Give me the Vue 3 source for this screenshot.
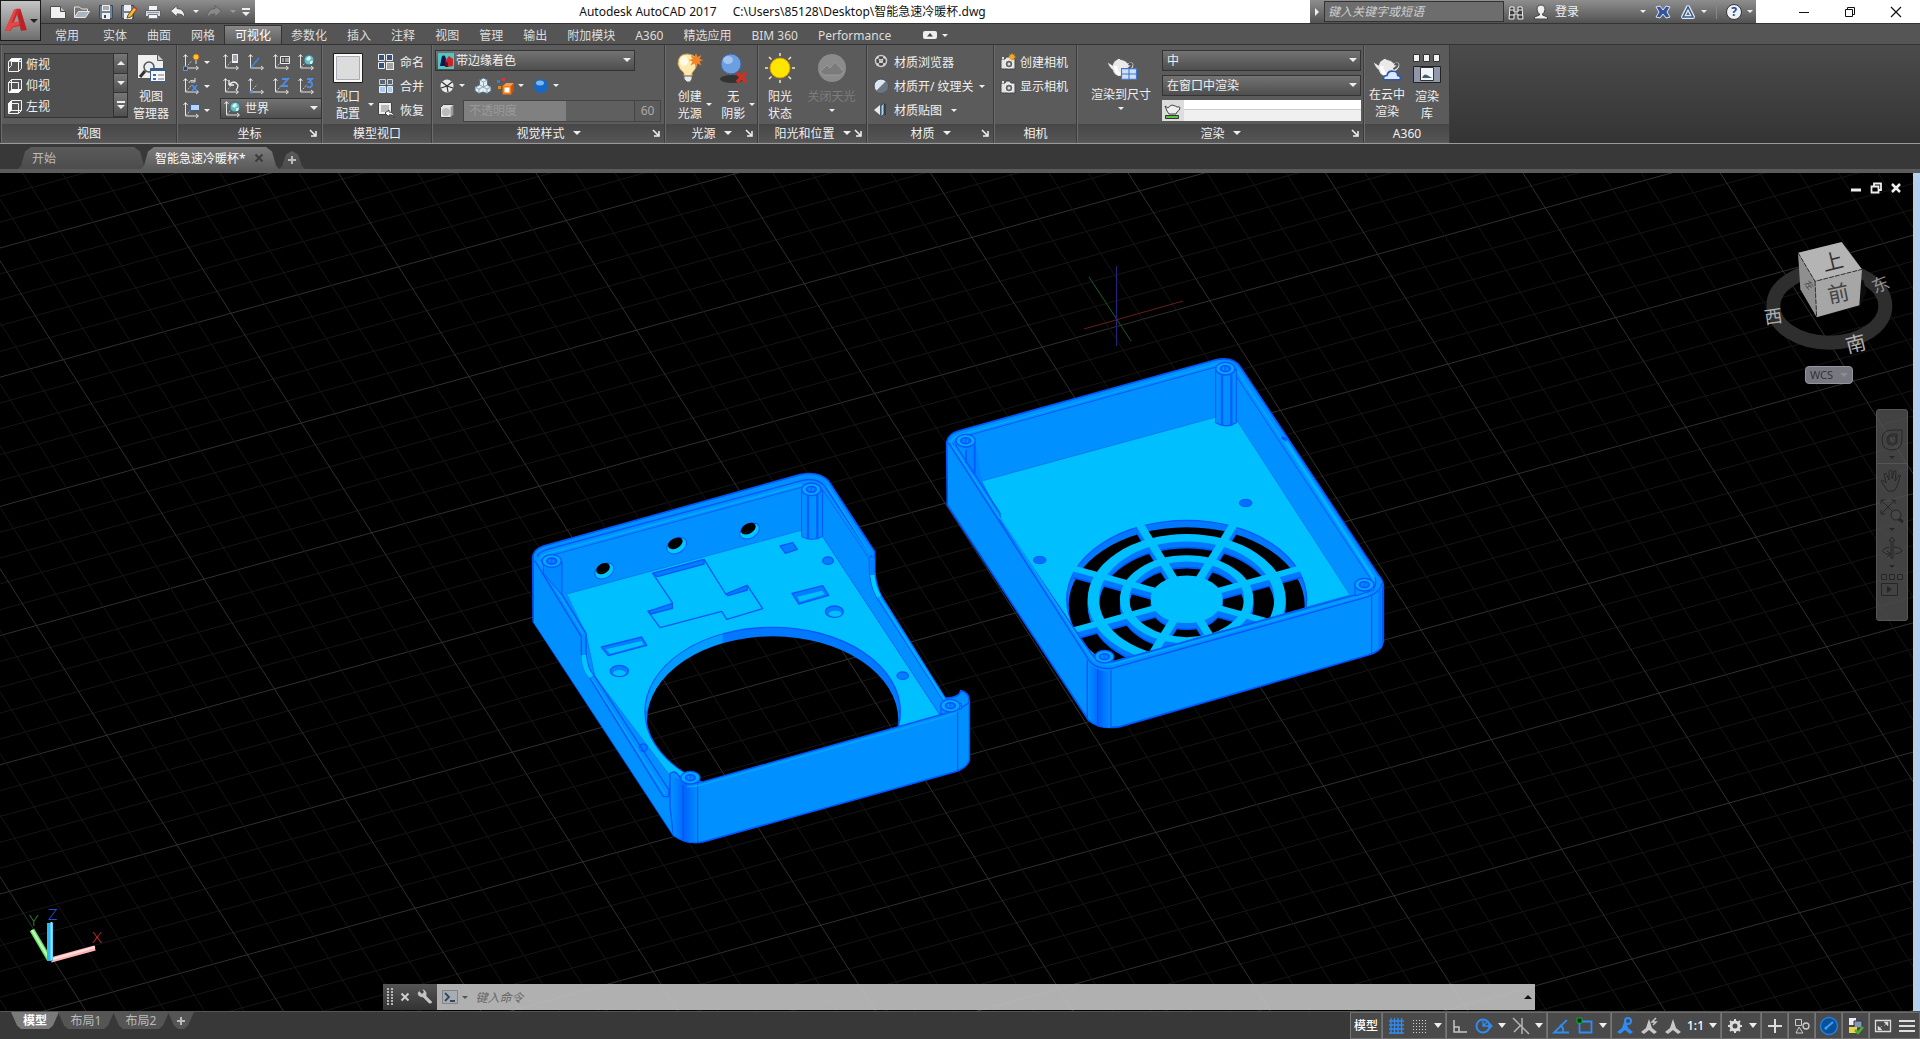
<script setup>
import { h } from 'vue'

const axes = '<path d="M3.500 2v13H16M1.500 4l2-2.500 2 2.500M14 13l2.500 2-2.500 2" fill="none" stroke="#e4e4e4"/><path d="M4 14.500l6-7" stroke="#bdbdbd" stroke-dasharray="2 1"/>'
const globe = (x, y, r) => `<circle cx="${x}" cy="${y}" r="${r}" fill="#6fb9c4" stroke="#2d6f86"/><path d="M${x - r + 2} ${y - 1}q2-${r - 2} ${r - 1}-${r - 2}l1 3-3 2zM${x + 1} ${y + 1}l3 0-1 3-2 0z" fill="#d6f5e6"/>`
const pot = '<path d="M2 9l5 3q1-4 4-5l2-2 2 2q5 1 6 3 5-2 6 1 1 4-5 8-3 4-9 4-5-1-6-6-4-3-5-8z" fill="#e9e9e9" stroke="#5d5d5d"/><path d="M22 12q3-2 3 0t-4 4" fill="none" stroke="#555" stroke-width="2"/><path d="M10 13q0 6 4 8" stroke="#fff" stroke-width="3" fill="none"/>'
const cube = '<path d="M2.500 5.500l3-3h10v10l-3 3h-10z" fill="#555" stroke="#f2f2f2"/>'
const cam = '<path d="M2 6h4l1-2h4l1 2h4v10H2z" fill="#e3e3e3" stroke="#444"/><circle cx="10" cy="11" r="4" fill="#666" stroke="#fff"/><circle cx="10" cy="11" r="1.500" fill="#ddd"/><path d="M3 4h2v2H3z" fill="#ddd"/>'
const person = '<path d="M9 2l3 9 5 4-3 2-5-4-5 4-3-2 5-4z" fill="currentColor"/>'

const icons = {
  logo: [32, 32, '<path d="M1 28L12 3q1-2 4-2h4l8 26-7 1-1.500-6-9 2L8 28z" fill="#d12a2e"/><path d="M12 18l4-10 3 9z" fill="#979797"/><path d="M12 3q1-2 4-2L9 18l11-2 1 4-11 3-3 5H1z" fill="#e2474a"/><path d="M20 1l8 26-7 1-4-17z" fill="#a91d22" opacity=".6"/>'],
  newf: [18, 16, '<path d="M1.500 2.500h10l5 5v7h-15z" fill="#f1f1f1" stroke="#4c4c4c"/><path d="M11.500 2.500v5h5" fill="#bcbcbc" stroke="#4c4c4c"/>'],
  open: [18, 16, '<path d="M1.500 13V3h5l2 2h6v3" fill="#777" stroke="#e4e4e4"/><path d="M1.500 13.500l4-6h11l-4 6z" fill="#a8b4c0" stroke="#e8e8e8"/>'],
  save: [16, 16, '<path d="M1.500 1.500h13v13h-13z" fill="#6f8296" stroke="#384858"/><path d="M4 1h8v6H4zM4 9h8v6H4z" fill="#eee"/><path d="M5 3h6M5 5h6" stroke="#666"/><path d="M6 11h2v3H6z" fill="#445"/>'],
  saveas: [18, 16, '<path d="M1.500 1.500h12v13h-12z" fill="#6f8296" stroke="#384858"/><path d="M4 1h7v6H4zM4 9h8v6H4z" fill="#eee"/><path d="M8 11l6-8 3 2-6 8-4 1z" fill="#f1b63f" stroke="#754a10"/><path d="M14 3l3 2" stroke="#c34" stroke-width="2"/>'],
  print: [18, 16, '<path d="M4.500 1.500h9v5h-9z" fill="#f4f4f4" stroke="#777"/><path d="M1.500 6.500h15v6h-15z" fill="#d9dde2" stroke="#59616a"/><path d="M4.500 10.500h9v4h-9z" fill="#eef6fc" stroke="#777"/><path d="M3 8.500h12" stroke="#89a"/>'],
  undo: [18, 16, '<path d="M1.500 7L8 1.500v3q8 0 8 10-2-5-8-4.500v3z" fill="#eee" stroke="#555"/>'],
  redo: [18, 16, '<path d="M16.500 7L10 1.500v3q-8 0-8 10 2-5 8-4.500v3z" fill="#898989" stroke="#626262"/>'],
  bino: [16, 16, '<path d="M2 3h4v5h4V3h4l1 12H10v-5H6v5H1z" fill="#3b3b3b" stroke="#f0f0f0"/><path d="M1 11h5M10 11h5M2 6h4M10 6h4" stroke="#f0f0f0"/>'],
  user: [16, 16, '<path d="M8 1q4 0 4 4.500Q11.500 9 9.500 10v1l5 2v2h-13v-2l5-2v-1Q4.500 9 4 5.500 4 1 8 1z" fill="#eee" stroke="#444"/>'],
  xch: [16, 16, '<path d="M1 3l4-1 3 4 3-4 4 1-3 5 3 5-4 1-3-4-3 4-4-1 3-5z" fill="#35549a" stroke="#dfe8f4"/>'],
  tri: [16, 16, '<path d="M8 3L3 13h10z" fill="none" stroke="#e1e8f1" stroke-width="4" stroke-linejoin="round"/><path d="M8 3L3 13h10z" fill="none" stroke="#36588f" stroke-width="1.500"/>'],
  min: [14, 14, '<path d="M2 7.500h10" stroke="#111"/>'],
  max: [14, 14, '<path d="M2.500 4.500h7v7h-7zM4.500 4.500v-2h7v7h-2" fill="none" stroke="#111"/>'],
  close: [14, 14, '<path d="M2 2l10 10M12 2L2 12" stroke="#111" stroke-width="1.200"/>'],
  vtop: [18, 18, cube + '<path d="M5.500 5.500h10M12.500 5.500v10M2.500 12.500l3-3v-4" stroke="#f2f2f2" fill="none"/><path d="M2.500 5.500l3-3h10l-3 3z" fill="#fff"/>'],
  vbot: [18, 18, cube + '<path d="M5.500 2.500v10h10M2.500 5.500h10v10" stroke="#f2f2f2" fill="none"/><path d="M2.500 15.500l3-3h10l-3 3z" fill="#fff"/>'],
  vleft: [18, 18, cube + '<path d="M5.500 2.500v10h10M12.500 15.500v-10h-10" stroke="#f2f2f2" fill="none"/><path d="M2.500 5.500l3-3v10l-3 3z" fill="#fff"/>'],
  vman: [32, 32, '<path d="M2.500 2.500h20l6 6v18h-26z" fill="#efefef" stroke="#555"/><path d="M22.500 2.500v6h6" fill="#ccc" stroke="#555"/><circle cx="14" cy="15" r="5" fill="#e8eef4" stroke="#555" stroke-width="1.500"/><path d="M10 19l-5 6" stroke="#333" stroke-width="3"/><path d="M15.500 16.500h15v13h-15z" fill="#f6f6f6" stroke="#3d5c86"/><path d="M16 18h14" stroke="#3d5c86" stroke-width="2"/><path d="M18 22h3v2h-3zM18 26h3v2h-3z" fill="#356bb8"/><path d="M23 23h6M23 27h6" stroke="#777"/>'],
  ax1: [20, 18, axes + '<circle cx="14" cy="4" r="3" fill="#f7c53a" stroke="#c66a12"/><path d="M14 7v4" stroke="#ddd"/><path d="M1.500 13.500h4v4h-4z" fill="#444" stroke="#5d96e8"/>'],
  ax2: [20, 18, axes + '<path d="M10 1h6v9h-6z" fill="#f0f0f0"/><path d="M11 3h4M11 5h4M11 7h4" stroke="#456"/>'],
  ax3: [20, 18, axes + '<path d="M4 14.500L12 5" stroke="#3a86ea" stroke-width="1.500"/>'],
  ax4: [20, 18, axes + '<path d="M8.500 3.500h9v7h-9z" fill="#444" stroke="#eee"/><path d="M10 6h2M13 6h4M10 8h2M13 8h4" stroke="#eee"/>'],
  ax5: [20, 18, axes + globe(12, 7, 5)],
  ax6: [20, 18, axes + '<path d="M7 6q1-4 6-2M13 1v4H9" stroke="#ddd" fill="none"/><path d="M10 8l5 6M15 8l-5 6" stroke="#4f8ee8" stroke-width="1.500"/>'],
  ax7: [20, 18, axes + '<path d="M7 8h5M7 8V3M7 8q5-6 9 0 0 3-2 5" stroke="#eee" fill="none" stroke-width="1.300"/>'],
  ax8: [20, 18, axes + '<circle cx="4" cy="15" r="1.500" fill="#4f8ee8"/>'],
  ax9: [20, 18, axes + '<path d="M10 2h6l-6 7h6" stroke="#4f8ee8" fill="none" stroke-width="1.800"/>'],
  ax10: [20, 18, axes + '<path d="M10 2h5l-3 3q4 0 3 3.500-2 3-5 1" stroke="#4f8ee8" fill="none" stroke-width="1.800"/>'],
  ax11: [20, 18, axes + '<path d="M8.500 3.500h9v6h-9z" fill="#b9d3f2" stroke="#345f9d"/>'],
  vport: [32, 32, '<path d="M1.500 1.500h29v29h-29z" fill="#fafafa" stroke="#1c1c1c"/><path d="M4.500 4.500h23v23h-23z" fill="#dcdcdc" stroke="#a9adb8"/>'],
  vnam: [18, 18, '<path d="M1.500 1.500h6v6h-6zM9.500 1.500h6v6h-6zM1.500 9.500h6v6h-6z" fill="#35527c" stroke="#eee"/><path d="M9 9h8v8H9z" fill="#eee"/><path d="M10 11h6M10 13h6M10 15h6" stroke="#555"/>'],
  vjoin: [18, 18, '<path d="M2.500 2.500h6v5h-6zM10.500 2.500h5v5h-5z" fill="#5b6672" stroke="#c9d4e2"/><path d="M2.500 9.500h6v6h-6zM10.500 9.500h5v6h-5z" fill="#a8ccf4" stroke="#e6f0fb"/>'],
  vres: [18, 18, '<path d="M1.500 1.500h13v12h-13z" fill="#eee" stroke="#444"/><path d="M4 4h8v7H4z" fill="#b9b9b9"/><path d="M8 12l4-3v2q5 0 5 6-1-4-5-3v2z" fill="#fff" stroke="#444"/>'],
  vs: [16, 16, '<path d="M0 0h16v16H0z" fill="#51c5c0"/><path d="M4 3q4-2 4 5v5H2z" fill="#15124f"/><path d="M7 8l4-5 4 3v7l-5 1z" fill="#c5252b"/><path d="M7 8l3 2v4H7z" fill="#6d0d16"/>'],
  wheel: [16, 16, '<circle cx="8" cy="8" r="6.500" fill="#e9e9e9"/><path d="M3 4l5 4-6 2M8 8l5-4M8 8l1 6M8 8l6 2" stroke="#333" fill="none" stroke-width="1.200"/>'],
  cubes: [18, 18, '<path d="M5.500 3l4-2 4 2v5l3.500 2v4l-4 2.500-4-1.500-4 1.500-4-2.500v-4l4.500-2z" fill="#e2ecf1" stroke="#4d7386"/><path d="M5.500 3l4 2 4-2M9.500 5v5l-4-2M9.500 10l4-2M1 10l4 2 4-2 4 2 4-2M5 12v4M13 12v4" stroke="#8caab8" fill="none"/>'],
  grp: [18, 18, '<path d="M1 3h3v3H1z" fill="#3b7ade"/><path d="M6 1h3v3H6z" fill="#d33"/><path d="M2 9h3v3H2z" fill="#e80"/><path d="M7.500 9.500h7v7h-7z" fill="#fff" stroke="#f57c13" stroke-width="2"/><path d="M7 9l3-3h8l-3 3z" fill="#f79a4a"/><path d="M15.500 9L18 6v8l-2.500 3z" fill="#c85200"/>'],
  ball: [16, 16, '<circle cx="8" cy="8" r="7" fill="#1668c4"/><ellipse cx="7" cy="5" rx="4" ry="2.500" fill="#78b7f2"/>'],
  xray: [16, 16, '<path d="M1.500 4.500l3-3h10v10l-3 3h-10z" fill="#e4e4e4" stroke="#444"/><path d="M11.500 4.500l3-3v10l-3 3z" fill="#999"/><circle cx="7" cy="9" r="4" fill="#bbb"/>'],
  bulb: [32, 32, '<path d="M13 2q10 0 10 10-1 5-5 9v3h-8v-3Q5 17 4 12 4 2 13 2z" fill="#ffe9ae" stroke="#d2a24a"/><ellipse cx="10" cy="9" rx="4" ry="5" fill="#fffbe8"/><path d="M10 24h8v3l-2 3h-3l-3-3z" fill="#e8e8e8" stroke="#666"/><path d="M22 1l1.500 4 4-2-2 4 4 1-4 1.500 2 4-4-2-1.500 4-1.500-4-4 2 2-4-4-1.500 4-1-2-4 4 2z" fill="#f0862a"/>'],
  noshadow: [32, 32, '<ellipse cx="15" cy="27" rx="12" ry="4" fill="#333"/><circle cx="14" cy="12" r="10" fill="#6d9ee0" stroke="#3d6bab"/><ellipse cx="11" cy="8" rx="5" ry="4" fill="#a3c4f0"/><path d="M20 21l9 9M29 21l-9 9" stroke="#cf3024" stroke-width="3.500"/>'],
  sun: [32, 32, '<path d="M16 1v30M1 16h30M5 5l22 22M27 5L5 27" stroke="#f4e7b8" stroke-width="1.500"/><circle cx="16" cy="16" r="12" fill="#5b5b5b"/><circle cx="16" cy="16" r="10" fill="#ffe500" stroke="#d99a00"/>'],
  sky: [32, 32, '<circle cx="16" cy="16" r="14" fill="#8b8b8b"/><path d="M4 20l7-7 3 3 5-6 9 10-4 3H8z" fill="#7b7b7b" stroke="#999"/>'],
  matb: [16, 16, '<circle cx="8" cy="7" r="5.500" fill="#444" stroke="#ccc" stroke-width="1.500"/><path d="M4 3l8 8M12 3l-8 8" stroke="#ddd" stroke-width="2" stroke-dasharray="2 1"/>'],
  mato: [16, 16, '<circle cx="8" cy="8" r="7" fill="#dce6ee" stroke="#445"/><path d="M3 13A7 7 0 0013 3z" fill="#6a7682"/>'],
  matm: [16, 16, '<path d="M1 8l6-5v10z" fill="#e8e8e8"/><path d="M8 4l3-3v11l-3 3z" fill="#a3cdf5" stroke="#356"/><path d="M12 2v11" stroke="#222"/>'],
  camn: [18, 18, cam + '<path d="M13 0l1 2 2-1-1 2 2 1-2 1 1 2-2-1-1 2-1-2-2 1 1-2-2-1 2-1-1-2 2 1z" fill="#f5a623"/>'],
  cams: [18, 18, cam],
  rsize: [30, 28, pot + '<path d="M15.500 15.500h14v10h-14z" fill="#cfe0f5" stroke="#4076c8"/><path d="M22.500 15.500v10M15.500 20.500h14" stroke="#4076c8"/>'],
  rcloud: [30, 28, pot + '<path d="M12 26q-1-4 3-4 1-5 6-4 4 0 4 4 4 1 2 4z" fill="#dbe9fa" stroke="#2f5aa8" stroke-width="1.500"/>'],
  rlib: [28, 32, '<path d="M.5 2.500h6v7h-6zM10.500 2.500h6v7h-6zM20.500 2.500h6v7h-6z" fill="#f1f1f1" stroke="#333"/><path d="M.5 14.500h27v16H.5z" fill="#8e98aa" stroke="#222"/><path d="M7.500 15.500h13v13h-13z" fill="#eef4f9" stroke="#333"/><path d="M9 26q2-5 5-3l5 3z" fill="#445c66"/>'],
  rprog: [20, 16, '<path d="M3 3l3 2q1-2 4-3 4 1 5 2 3-1 3 1t-3 4l-1 2H7Q5 9 3 3z" fill="#eee" stroke="#444"/><path d="M3.500 12.500h13v3h-13z" fill="#5cc43c" stroke="#333"/>'],
  launch: [8, 8, '<path d="M1 1l5 5M7 2v5H2" stroke="#f2f2f2" stroke-width="1.500" fill="none"/>'],
  pill: [14, 10, '<rect x="0" y="1" width="14" height="8" rx="2" fill="#eee"/><path d="M4 6.500L7 3l3 3.500z" fill="#444"/>'],
  x: [10, 10, '<path d="M1.500 1.500l7 7M8.500 1.500l-7 7" stroke="currentColor" stroke-width="2"/>'],
  plus: [10, 10, '<path d="M5 1v8M1 5h8" stroke="currentColor" stroke-width="2"/>'],
  wrench: [16, 16, '<path d="M2 3l3 3 2-1V1q-4-1-6 3 0 4 5 4l6 6q2 1 3-1L9 7q1-4-2-6" fill="#c4c4c4" stroke="#c4c4c4" stroke-width=".5"/><path d="M2 2l3 3 2-2-2-3z" fill="#444"/>'],
  grip: [6, 18, '<path d="M1 0v18M5 0v18" stroke="#b5b5b5" stroke-width="2" stroke-dasharray="2 1"/>'],
  prompt: [16, 16, '<path d="M.5 1.500h15v13H.5z" fill="#a7adb5" stroke="#7f858c"/><path d="M3 4l4 4-4 4M8 12h5" fill="none" stroke="#3a4654" stroke-width="1.800"/>'],
  wmin: [12, 10, '<path d="M1 7h10" stroke="#eee" stroke-width="3"/>'],
  wmax: [12, 12, '<path d="M1.500 4.500h7v6h-7zM4 4V1.500h7V8H9" fill="none" stroke="#eee" stroke-width="1.800"/>'],
  wx: [12, 12, '<path d="M2 2l8 8M10 2l-8 8" stroke="#eee" stroke-width="2.500"/>'],
  nwheel: [24, 24, '<path d="M22 2v9q0 11-10 11T2 12 12 2zM17 6v6q0 5-5 5t-5-5 5-6z" fill="none" stroke="#262626"/><rect x="9" y="8" width="7" height="7" fill="none" stroke="#262626"/>'],
  nhand: [24, 26, '<path d="M8 23Q3 17 1 13q1-2 5 2L4 6q2-2 3 1l2 5V3q2-2 3 0v8l2-8q2-1 2 1l-1 9 4-6q2 0 1 2l-3 9q-1 3-3 5z" fill="none" stroke="#262626"/>'],
  nzoom: [26, 26, '<path d="M2 2l14 14M16 2L2 16M2 6V2h4M12 2h4v4M2 12v4h4" fill="none" stroke="#262626"/><circle cx="17" cy="17" r="5" fill="#454545" stroke="#262626"/><path d="M20 21l4 3" stroke="#262626" stroke-width="3"/>'],
  norbit: [24, 26, '<path d="M11 23V6H9l3-4 3 4h-2v17zM9 12Q1 14 3 17q3 3 7 2M14 12q8 1 8 4-1 2-7 3M7 16l4 3-4 3" fill="none" stroke="#262626"/>'],
  nshow: [24, 26, '<path d="M1.500 2.500h5v5h-5zM9.500 2.500h5v5h-5zM17.500 2.500h5v5h-5zM1.500 11.500h16v12h-16z" fill="none" stroke="#262626"/><path d="M7 14l5 3-5 4z" fill="#262626"/>'],
  sgrid: [16, 18, '<path d="M3 1v16M6.500 1v16M10 1v16M13.500 1v16M1 4h15M1 8h15M1 12h15M1 16h15" stroke="#2f8cf5" stroke-width="1.300"/>'],
  sdots: [16, 16, '<path d="M1 2.500h15M1 5.500h15M1 8.500h15M1 11.500h15M1 14.500h15" stroke="#d5d5d5" stroke-dasharray="1 2"/>'],
  sortho: [16, 16, '<path d="M2 2v12h13M2 9h5v5" stroke="#c5c5c5" stroke-width="1.500" fill="none"/>'],
  spolar: [18, 18, '<circle cx="8" cy="9" r="6.500" stroke="#2f8cf5" stroke-width="2" fill="none"/><path d="M8 4v5h9M8 9l5-5M14 6l3 3-3 3" stroke="#2f8cf5" stroke-width="1.300" fill="none"/>'],
  siso: [18, 18, '<path d="M1 1l16 16M10 1v16M8 9l-6 6" stroke="#b5b5b5" stroke-width="1.500"/>'],
  sangle: [18, 18, '<path d="M15 3L2 15.500h15M8 8l3 3v5" stroke="#2f8cf5" stroke-width="1.800" fill="none"/>'],
  sosnap: [18, 18, '<path d="M3.500 4.500h12v11h-12z" stroke="#2f8cf5" stroke-width="1.800" fill="none"/><path d="M1 1h5v5H1z" fill="#06320c" stroke="#00b32a"/>'],
  sa1: [18, 18, person + '<circle cx="12" cy="4" r="3" fill="#4a4a4a" stroke="currentColor" stroke-width="2"/>'],
  sa2: [18, 18, person + '<path d="M16 1l-4 4h4l-3 3" fill="none" stroke="currentColor" stroke-width="1.500"/>'],
  sa3: [18, 18, person],
  gear: [16, 16, '<circle cx="8" cy="8" r="4" fill="none" stroke="#ddd" stroke-width="3"/><path d="M8 1v3M8 12v3M1 8h3M12 8h3M3 3l2 2M11 11l2 2M13 3l-2 2M5 11l-2 2" stroke="#ddd" stroke-width="2"/>'],
  splus: [16, 16, '<path d="M8 1v14M1 8h14" stroke="#ddd" stroke-width="2"/>'],
  shapes: [16, 16, '<path d="M1.500 1.500h6v6h-6zM5 9l4 6H2z" fill="none" stroke="#ccc"/><circle cx="12" cy="8" r="3" fill="none" stroke="#ccc" stroke-width="1.300"/>'],
  perf: [20, 20, '<circle cx="10" cy="10" r="8.500" fill="#0d4f94" stroke="#1e7fe0" stroke-width="1.500"/><path d="M6 13l8-7" stroke="#35a0ff" stroke-width="2"/><circle cx="7" cy="12" r="1.500" fill="#35a0ff"/>'],
  iso: [18, 18, '<path d="M2 1h7v7H2z" fill="#eee"/><path d="M7 4h8v7H7z" fill="#7d98b8" stroke="#334"/><path d="M2 10h8v6H2z" fill="#e6d44c"/><path d="M8 13l3 3 5-6" stroke="#4fae2c" stroke-width="2.500" fill="none"/>'],
  full: [18, 16, '<path d="M1.500 2.500h15v11h-15z" fill="none" stroke="#ddd" stroke-width="1.300"/><path d="M5 11l3-3M10 8l3-3M4 8v4h4zM14 8V4h-4z" fill="#ddd" stroke="#ddd" stroke-width=".5"/>'],
  burger: [16, 16, '<path d="M0 3h16M0 8h16M0 13h16" stroke="#ddd" stroke-width="2"/>'],
}

const Icon = (p) => {
  const [w, ht, body] = icons[p.n]
  return h('svg', { class: 'ico', width: p.w || w, height: p.w ? Math.round((p.w * ht) / w) : ht, viewBox: `0 0 ${w} ${ht}`, 'aria-hidden': 'true', innerHTML: body })
}
Icon.props = ['n', 'w']

const tabs = ['常用', '实体', '曲面', '网格', '可视化', '参数化', '插入', '注释', '视图', '管理', '输出', '附加模块', 'A360', '精选应用', 'BIM 360', 'Performance']

// Grid lines of the drawing plane: every fifth line is a major one
const shallow = []
for (let k = -5; k < 60; k++) shallow.push({ c: 75 + (k * 129.2) / 5, major: k % 5 === 0 })
const steep = []
for (let k = -30; k < 60; k++) steep.push({ c: 338.5 + (k * 197.4) / 5, major: k % 5 === 0 })

const spokes = [22.5, 67.5, 112.5, 157.5, 202.5, 247.5, 292.5, 337.5].map((a) => ({
  x: Math.round(366 * Math.cos((a * Math.PI) / 180)),
  y: Math.round(366 * Math.sin((a * Math.PI) / 180)),
}))

const status = [
  ['sgrid', 'sdots', 'v'],
  ['sortho', 'spolar', 'v', 'siso', 'v'],
  ['sangle', 'sosnap', 'v'],
  ['sa1', 'sa2', 'sa3', '1:1', 'v'],
  ['gear', 'v'],
  ['splus'], ['shapes'], ['perf'], ['iso'],
  ['full', 'burger'],
]
</script>

<template>
  <div class="app">
    <header class="head">
      <button class="appbtn" aria-label="应用程序菜单"><Icon n="logo" w="26" /><i class="car dark"></i></button>
      <div class="titlebar">
        <div class="qat">
          <button v-for="n in ['newf', 'open', 'save', 'saveas', 'print', 'undo']" :key="n" class="q" :aria-label="n"><Icon :n="n" /></button>
          <i class="car"></i>
          <button class="q" aria-label="redo"><Icon n="redo" /></button>
          <i class="car dim"></i>
          <span class="more"><i class="car lg"></i></span>
        </div>
        <div class="title"><span>Autodesk AutoCAD 2017</span><span>C:\Users\85128\Desktop\智能急速冷暖杯.dwg</span></div>
        <div class="info">
          <i class="right"></i>
          <input class="search" type="text" placeholder="键入关键字或短语" aria-label="搜索" />
          <Icon n="bino" /><Icon n="user" />
          <a href="#" class="login">登录</a><i class="car"></i>
          <Icon n="xch" /><Icon n="tri" /><i class="car near"></i><i class="sep"></i>
          <button class="help">?</button><i class="car near"></i>
        </div>
        <div class="win">
          <button aria-label="最小化"><Icon n="min" /></button>
          <button aria-label="还原"><Icon n="max" /></button>
          <button aria-label="关闭"><Icon n="close" /></button>
        </div>
      </div>
      <nav class="tabs">
        <button v-for="t in tabs" :key="t" :class="{ on: t === '可视化' }">{{ t }}</button>
        <span class="pill"><Icon n="pill" /><i class="car"></i></span>
      </nav>
    </header>

    <section class="ribbon">
      <div class="panel p-view">
        <div class="body">
          <div class="list">
            <ul>
              <li><Icon n="vtop" />俯视</li>
              <li><Icon n="vbot" />仰视</li>
              <li><Icon n="vleft" />左视</li>
            </ul>
            <div class="scroll">
              <button aria-label="上"><i class="car up"></i></button>
              <button aria-label="下"><i class="car lg"></i></button>
              <button aria-label="更多"><span class="more"><i class="car lg"></i></span></button>
            </div>
          </div>
          <button class="big"><Icon n="vman" /><span>视图<br />管理器</span></button>
        </div>
        <footer>视图</footer>
      </div>

      <div class="panel p-coord">
        <div class="body coord">
          <div class="cc">
            <span><Icon n="ax1" /><i class="car"></i></span>
            <span><Icon n="ax6" /><i class="car"></i></span>
            <span><Icon n="ax11" /><i class="car"></i></span>
          </div>
          <div class="cr">
            <div class="cg">
              <Icon v-for="n in ['ax2', 'ax3', 'ax4', 'ax5', 'ax7', 'ax8', 'ax9', 'ax10']" :key="n" :n="n" />
            </div>
            <label class="sel"><Icon n="ax5" /><select aria-label="坐标系"><option>世界</option></select></label>
          </div>
        </div>
        <footer>坐标<Icon n="launch" class="la" /></footer>
      </div>

      <div class="panel p-vport">
        <div class="body">
          <button class="big"><Icon n="vport" /><span>视口<br />配置</span><i class="car side"></i></button>
          <div class="rows">
            <button><Icon n="vnam" />命名</button>
            <button><Icon n="vjoin" />合并</button>
            <button><Icon n="vres" />恢复</button>
          </div>
        </div>
        <footer>模型视口</footer>
      </div>

      <div class="panel p-style">
        <div class="body col">
          <label class="sel wide"><Icon n="vs" /><select aria-label="视觉样式"><option>带边缘着色</option></select></label>
          <div class="line">
            <Icon n="wheel" /><i class="car"></i><Icon n="cubes" /><Icon n="grp" /><i class="car"></i><Icon n="ball" /><i class="car"></i>
          </div>
          <div class="line">
            <Icon n="xray" />
            <div class="slider"><label for="opacity">不透明度</label><input id="opacity" type="range" value="60" disabled /><output for="opacity">60</output></div>
          </div>
        </div>
        <footer>视觉样式<i class="car lg"></i><Icon n="launch" class="la" /></footer>
      </div>

      <div class="panel p-light">
        <div class="body">
          <button class="big"><Icon n="bulb" /><span>创建<br />光源</span><i class="car side"></i></button>
          <button class="big"><Icon n="noshadow" /><span>无<br />阴影</span><i class="car side"></i></button>
        </div>
        <footer>光源<i class="car lg"></i><Icon n="launch" class="la" /></footer>
      </div>

      <div class="panel p-sun">
        <div class="body">
          <button class="big"><Icon n="sun" /><span>阳光<br />状态</span></button>
          <button class="big off" disabled><Icon n="sky" /><span>关闭天光</span><i class="car"></i></button>
        </div>
        <footer>阳光和位置<i class="car lg"></i><Icon n="launch" class="la" /></footer>
      </div>

      <div class="panel p-mat">
        <div class="body">
          <div class="rows">
            <button><Icon n="matb" />材质浏览器</button>
            <button><Icon n="mato" />材质开/ 纹理关<i class="car"></i></button>
            <button><Icon n="matm" />材质贴图<i class="car gap"></i></button>
          </div>
        </div>
        <footer>材质<i class="car lg"></i><Icon n="launch" class="la" /></footer>
      </div>

      <div class="panel p-cam">
        <div class="body">
          <div class="rows">
            <button><Icon n="camn" />创建相机</button>
            <button><Icon n="cams" />显示相机</button>
          </div>
        </div>
        <footer>相机</footer>
      </div>

      <div class="panel p-render">
        <div class="body">
          <button class="big"><Icon n="rsize" w="32" /><span>渲染到尺寸</span><i class="car"></i></button>
          <div class="rsel">
            <label class="sel"><select aria-label="渲染预设"><option>中</option></select></label>
            <label class="sel"><select aria-label="渲染目标"><option>在窗口中渲染</option></select></label>
            <div class="prog"><Icon n="rprog" /></div>
          </div>
        </div>
        <footer>渲染<i class="car lg"></i><Icon n="launch" class="la" /></footer>
      </div>

      <div class="panel p-a360">
        <div class="body">
          <button class="big"><Icon n="rcloud" w="32" /><span>在云中<br />渲染</span></button>
          <button class="big"><Icon n="rlib" /><span>渲染<br />库</span></button>
        </div>
        <footer>A360</footer>
      </div>
    </section>

    <nav class="files">
      <button class="ft">开始</button>
      <button class="ft on">智能急速冷暖杯*<Icon n="x" /></button>
      <button class="ft add" aria-label="新建"><Icon n="plus" /></button>
    </nav>

    <main class="canvas">
      <svg class="scene" width="100%" height="100%">
        <defs>
          <clipPath id="holeClip"><ellipse cx="818" cy="815" rx="381" ry="252" /></clipPath>
          <mask id="holeMask" maskUnits="userSpaceOnUse" x="0" y="0" width="1500" height="1300">
            <rect width="1500" height="1300" fill="#fff" />
            <g fill="#000">
              <ellipse cx="818" cy="841" rx="377" ry="252" clip-path="url(#holeClip)" />
              <ellipse cx="309" cy="386" rx="22" ry="15" transform="rotate(-30 309 386)" />
              <ellipse cx="526" cy="310" rx="24" ry="15" transform="rotate(-30 526 310)" />
              <ellipse cx="745" cy="266" rx="24" ry="15" transform="rotate(-30 745 266)" />
            </g>
          </mask>
          <linearGradient id="edge"><stop offset="0" stop-color="#0090ff" /><stop offset=".5" stop-color="#0064ff" /><stop offset="1" stop-color="#0090ff" /></linearGradient>
          <clipPath id="floorClip"><path d="M185 423L885 232L950 240L1290 765L580 962L510 940L245 540z" /></clipPath>
          <g id="post">
            <path d="M-31 0V142Q0 158 31 142V0z" fill="#0090ff" stroke="#0055ff" stroke-width="3" />
            <path d="M-12 14V150M16 14V150" stroke="#0060ff" stroke-width="7" />
          </g>
          <g id="cap">
            <ellipse rx="29" ry="19" fill="#00a8ff" stroke="#0055ff" stroke-width="4" />
            <ellipse rx="15" ry="9" fill="#0070ff" stroke="#0050ff" stroke-width="4" />
            <path d="M-6 4V-5M5 5V-3" stroke="#00a0ff" stroke-width="3" />
          </g>
          <g id="grille" fill="none">
            <circle r="280" stroke-width="34" /><circle r="186" stroke-width="28" />
            <path v-for="s in spokes" :key="s.x + ',' + s.y" :d="`M0 0L${s.x} ${s.y}`" stroke-width="26" />
            <circle r="54" stroke-width="108" />
          </g>
        </defs>

        <g stroke="#151515">
          <line v-for="(l, i) in shallow" :key="i" x1="0" :y1="l.c" x2="3000" :y2="l.c - 830.4" :class="{ major: l.major }" />
          <line v-for="(l, i) in steep" :key="'s' + i" :x1="l.c" y1="0" :x2="l.c + 1282" y2="2000" :class="{ major: l.major }" />
        </g>

        <path d="M1084 156L1183 128" stroke="#64201c" /><path d="M1089 104L1131 168" stroke="#1c5c24" /><path d="M1116.500 93V173" stroke="#24247c" />

        <g transform="translate(500 267) scale(.33333)" stroke-linejoin="round">
          <g mask="url(#holeMask)">
            <path d="M98 355Q98 328 130 318L900 104Q955 92 985 122L1124 335V395Q1128 440 1145 470L1335 775Q1380 772 1382 752Q1408 758 1408 785V960Q1400 985 1365 995L610 1205Q560 1215 520 1185L100 545z" fill="#0090ff" stroke="#0055ff" stroke-width="5" />
            <path d="M190 465L900 272L970 290L1320 825L1300 850L1210 900L620 1060L520 1020L285 710L258 580z" fill="#00bfff" stroke="#0070e8" stroke-width="2" />
            <path d="M112 350Q115 335 150 326L905 122Q950 110 975 140L1115 350" fill="none" stroke="#0055ff" stroke-width="4" />
            <path d="M122 360Q122 344 150 338L905 134" fill="none" stroke="#00a8ff" stroke-width="5" />
            <path d="M140 350L905 142" fill="none" stroke="#0060ff" stroke-width="3" />
            <path d="M968 150L1105 352H1124V395Q1128 440 1145 470L1340 780L1320 825L968 290z" fill="#0090ff" stroke="#0068ff" stroke-width="3" />
            <path d="M980 135L1112 345" fill="none" stroke="#00a8ff" stroke-width="4" />
            <path d="M1108 352V400Q1112 440 1128 470L1330 782" fill="none" stroke="#0058ff" stroke-width="3" />
            <path d="M1117 360V398Q1120 440 1137 468" fill="none" stroke="#0080ff" stroke-width="12" />
            <path d="M1117 405Q1121 444 1137 470" fill="none" stroke="#00d0ff" stroke-width="12" />
            <path d="M1137 470L1332 778" fill="none" stroke="#00b0ff" stroke-width="6" />
            <g fill="#0080ff" stroke="#0058ff" stroke-width="4">
              <path d="M458 400L612 358L677 462L742 436L788 506L680 538L665 514L480 563L444 514L517 498V488z" fill="#00bfff" />
              <path d="M458 400L612 358V372L472 410zM677 462L742 436V450L684 467zM444 514L517 490V505L452 522z" />
              <path d="M304 621L425 591L440 616L325 647zM876 460L968 437L986 466L896 492z" />
              <path d="M318 628L425 603L430 614L330 641zM892 470L966 452L974 463L900 485z" fill="#00bfff" stroke="none" />
              <path d="M840 318L878 308L892 328L856 340z" />
              <ellipse cx="984" cy="362" rx="16" ry="11" /><ellipse cx="1208" cy="707" rx="17" ry="11" /><ellipse cx="430" cy="923" rx="12" ry="11" />
              <ellipse cx="1003" cy="515" rx="27" ry="17" /><ellipse cx="358" cy="693" rx="27" ry="17" />
            </g>
            <ellipse cx="1005" cy="521" rx="19" ry="9" fill="#00bfff" /><ellipse cx="358" cy="699" rx="19" ry="9" fill="#00bfff" />
            <g fill="#00c8ff" stroke="#0058ff" stroke-width="3">
              <ellipse cx="313" cy="393" rx="31" ry="21" transform="rotate(-30 313 393)" />
              <ellipse cx="530" cy="317" rx="32" ry="22" transform="rotate(-30 530 317)" />
              <ellipse cx="749" cy="273" rx="32" ry="21" transform="rotate(-30 749 273)" />
            </g>
            <ellipse cx="818" cy="815" rx="383" ry="253" fill="#0078ff" stroke="#0058ff" stroke-width="4" />
            <path d="M437 815A381 252 0 01668 583V608A381 252 0 00450 790z" fill="#009cff" />
          </g>
          <path d="M100 350L155 362L258 580V640Q262 690 285 710L510 1075L520 1185L100 545z" fill="#0090ff" />
          <path d="M125 372L186 465V380z" fill="#0080ff" />
          <g fill="none" stroke="#0055ff" stroke-width="4">
            <path d="M100 345V545M104 362L244 590V640Q250 690 270 715L490 1070H505L515 1000M122 360L258 580V640Q262 690 285 710L510 1055" />
            <path d="M116 362L250 582M275 716L495 1062" stroke="#00a8ff" />
          </g>
          <path d="M251 645Q254 690 274 710" stroke="#00c8ff" stroke-width="14" fill="none" />
          <path d="M510 1000Q530 985 545 1025Q575 1035 610 1025L1330 822Q1400 800 1408 785V960Q1400 985 1365 995L610 1205Q560 1215 520 1185L510 1100z" fill="#0090ff" stroke="#0055ff" stroke-width="4" />
          <path d="M515 1010L593 1032V1206Q555 1210 520 1185z" fill="url(#edge)" />
          <path d="M549 1035V1200M593 1030V1206M1373 808V992" stroke="#0050e8" stroke-width="3" />
          <path d="M560 1040Q590 1040 620 1030L1330 832Q1385 816 1390 785" fill="none" stroke="#00a8ff" stroke-width="4" />
          <use href="#post" transform="translate(936 148)" /><use href="#cap" transform="translate(934 148)" />
          <path d="M130 365V400L186 465V365z" fill="#0088ff" stroke="#0058ff" stroke-width="3" /><use href="#cap" transform="translate(155 363)" />
          <path d="M1323 795V823L1385 806V790z" fill="#0090ff" stroke="#0055ff" stroke-width="3" /><use href="#cap" transform="translate(1351 797)" />
          <use href="#cap" transform="translate(571 1013)" />
        </g>

        <g transform="translate(920 167) scale(.33333)" stroke-linejoin="round">
          <path d="M80 310Q82 280 125 270L885 60Q940 48 962 82L1375 705Q1392 722 1390 745V905Q1385 935 1345 945L600 1160Q540 1170 505 1140L82 495z" fill="#0090ff" stroke="#0055ff" stroke-width="5" />
          <path d="M92 310Q95 290 140 279L885 73Q930 60 948 88L1365 722" fill="none" stroke="#00a8ff" stroke-width="4" />
          <path d="M98 318Q100 298 145 286L885 82Q925 72 942 98L1095 330L1355 722" fill="none" stroke="#0058ff" stroke-width="3" />
          <path d="M185 423L885 232L950 240L1290 765L580 962L510 940L245 540z" fill="#00bfff" stroke="#0070e8" stroke-width="2" />
          <path d="M1098 305L1365 720" stroke="#00b4ff" stroke-width="7" />
          <path d="M1085 292L1100 300" stroke="#0055ff" stroke-width="8" />
          <g clip-path="url(#floorClip)">
            <ellipse cx="800" cy="778" rx="360" ry="237" fill="#0078ff" stroke="#0058ff" stroke-width="4" />
            <ellipse cx="800" cy="796" rx="354" ry="234" fill="#000" />
            <g stroke="#0058ff"><use href="#grille" transform="translate(800 799) scale(1 .66)" /></g>
            <g stroke="#0078ff"><use v-for="d in [16, 11, 6]" :key="d" href="#grille" :transform="`translate(800 ${778 + d}) scale(1 .66)`" /></g>
            <g stroke="#00bfff"><use href="#grille" transform="translate(800 778) scale(1 .66)" /></g>
          </g>
          <g fill="#0070ff" stroke="#0055ff" stroke-width="3"><ellipse cx="977" cy="489" rx="19" ry="11" /><ellipse cx="359" cy="660" rx="19" ry="11" /></g>
          <path d="M136 305V385L185 423L165 300z" fill="#0084ff" />
          <path d="M164 310V400M138 330V370" stroke="#0058ff" stroke-width="5" />
          <g fill="none" stroke="#0055ff" stroke-width="4">
            <path d="M85 308L500 950Q520 990 575 985L1345 770Q1385 755 1385 730" />
            <path d="M105 312L240 520V540L510 935Q530 970 580 965L1340 755Q1375 745 1365 712" />
            <path d="M97 315L505 940Q525 975 578 972L1342 763" stroke="#00a8ff" />
            <path d="M502 960V1135M1388 740V905" />
          </g>
          <path d="M504 965Q530 997 573 992V1164Q530 1162 504 1136z" fill="url(#edge)" />
          <path d="M533 985V1160M573 990V1164M1355 768V940" stroke="#0050e8" stroke-width="3" />
          <path d="M1380 750V925" stroke="#0078ff" stroke-width="10" />
          <use href="#post" transform="translate(918 88) scale(1 1.130)" /><use href="#cap" transform="translate(916 86)" />
          <path d="M1305 735V768L1362 750V735z" fill="#0090ff" stroke="#0055ff" stroke-width="3" />
          <use href="#cap" transform="translate(137 302)" /><use href="#cap" transform="translate(1333 734)" /><use href="#cap" transform="translate(553 950)" />
        </g>
      </svg>

      <div class="wctl"><Icon n="wmin" /><Icon n="wmax" /><Icon n="wx" /></div>

      <svg class="vcube" width="182" height="140" viewBox="0 0 546 420">
        <ellipse cx="298" cy="258" rx="168" ry="110" fill="none" stroke="#2e2e2e" stroke-width="42" />
        <path d="M215 215L260 292L390 260L410 215L400 180z" fill="#0c0c0c" />
        <path d="M204 98L335 66L396 148L255 184z" fill="#b4b4b4" /><path d="M204 98L255 184L260 292L211 208z" fill="#8f8f8f" /><path d="M255 184L396 148L388 256L260 292z" fill="#a6a6a6" />
        <path d="M204 98L255 184L396 148M255 184L260 292" fill="none" stroke="#333" stroke-width="3" stroke-dasharray="14 4" />
        <g class="ct" text-anchor="middle">
          <text x="308" y="147" font-size="62" fill="#333" transform="rotate(-14 308 125)">上</text>
          <text x="325" y="244" font-size="64" fill="#444" transform="rotate(-12 325 220)">前</text>
          <text x="232" y="202" font-size="26" fill="#444" transform="rotate(50 232 200)">左</text>
          <text x="130" y="309" font-size="54" fill="#b0b0b0" transform="rotate(-8 130 290)">西</text>
          <text x="452" y="212" font-size="52" fill="#909090" transform="rotate(-22 452 194)">东</text>
          <text x="377" y="393" font-size="60" fill="#b0b0b0" transform="rotate(-14 377 372)">南</text>
        </g>
      </svg>
      <button class="wcs">WCS<i></i></button>
      <div class="nav">
        <Icon n="nwheel" /><i class="car"></i><hr /><Icon n="nhand" /><Icon n="nzoom" /><i class="car"></i><Icon n="norbit" /><i class="car"></i><Icon n="nshow" />
      </div>

      <svg class="ucs" width="120" height="131" viewBox="0 0 120 131">
        <path d="M51 80L95 68" stroke="#ffb3b3" stroke-width="5" /><path d="M53 79L95 67" stroke="#ffe0e0" stroke-width="2" />
        <path d="M49 79L32 50" stroke="#6be86b" stroke-width="5" /><path d="M48 77L32 50" stroke="#c5ffc0" stroke-width="2" />
        <path d="M50 81V43" stroke="#2cb8f5" stroke-width="6" /><path d="M51.500 80V42" stroke="#8ce8ff" stroke-width="2" />
        <g class="ax"><text x="29" y="46" fill="#2f9a2f">Y</text><text x="48" y="40" fill="#2a60f0">Z</text><text x="92" y="63" fill="#d83a3a">X</text></g>
      </svg>

      <div class="cmd">
        <div class="cmdl"><Icon n="grip" /><Icon n="x" /><Icon n="wrench" /></div>
        <div class="cmdr"><Icon n="prompt" /><i class="car"></i><input type="text" placeholder="键入命令" aria-label="命令" /><i class="car up"></i></div>
      </div>
    </main>

    <footer class="bottom">
      <div class="lay">
        <button class="on">模型</button><button>布局1</button><button>布局2</button><button class="add" aria-label="新建布局"><Icon n="plus" /></button>
      </div>
      <div class="stat">
        <div class="sg"><button class="model">模型</button></div>
        <div v-for="(g, i) in status" :key="i" class="sg">
          <template v-for="(s, j) in g" :key="j">
            <i v-if="s === 'v'" class="car lg"></i>
            <button v-else-if="s === '1:1'" class="scale">1:1</button>
            <button v-else :class="['si', s]" :aria-label="s"><Icon :n="s" /></button>
          </template>
        </div>
      </div>
    </footer>
  </div>
</template>

<style>
body { margin: 0; background: #000; }
.ico { display: block; flex: none; }
</style>

<style scoped>
* { box-sizing: border-box; }
.app { min-height: 100vh; display: flex; flex-direction: column; font: 12px/17px "Noto Sans", "Noto Sans CJK SC", sans-serif; color: #f0f0f0; background: #383838; }
button, input, select { font: inherit; color: inherit; background: none; border: 0; padding: 0; margin: 0; }
button { white-space: nowrap; }
a { color: inherit; text-decoration: none; }
.car { flex: none; display: block; width: 0; height: 0; border: 3px solid transparent; border-top-color: #eee; border-bottom: 0; }
.car.lg { border-width: 4px 4px 0; }
.car.up { border-top: 0; border-bottom: 4px solid #eee; border-left-width: 4px; border-right-width: 4px; }
.car.dark { border-top-color: #222; border-width: 4px 4px 0; }
.car.dim { border-top-color: #999; }

.head { display: grid; grid-template: 24px 20px / 41px 1fr; background: #555; }
.appbtn { grid-row: 1 / 3; height: 41px; display: flex; align-items: center; justify-content: center; background: linear-gradient(#c4c4c4, #6e6e6e); border: 1px solid #1b1b1b; }
.titlebar { display: flex; background: #fff; border-bottom: 1px solid #333; }
.qat { width: 214px; padding: 0 5px 0 8px; display: flex; align-items: center; justify-content: space-between; background: linear-gradient(#8e8e8e, #525252); }
.more { border-top: 2px solid #eee; padding-top: 2px; }
.title { flex: 1; display: flex; justify-content: center; align-items: center; gap: 16px; color: #111; }
.info { width: 446px; display: flex; align-items: center; gap: 9px; padding: 0 3px 0 5px; background: linear-gradient(#8e8e8e, #525252); }
.right { border: 4px solid transparent; border-left: 4px solid #eee; border-right: 0; }
.info .right { margin-right: -4px; }
.search { flex: none; width: 180px; height: 21px; padding: 0 3px; background: #6d6d6d; border: 1px solid #333; font-style: italic; margin-right: -5px; }
.search::placeholder { color: #d0d0d0; opacity: 1; }
.login { flex: 1; margin-left: -3px; }
.near { margin-left: -4px; }
.sep { width: 1px; height: 14px; background: #888; }
.help { width: 16px; height: 16px; line-height: 14px; border-radius: 8px; background: #eef2f8; color: #23488f; border: 1px solid #333; font-weight: 700; }
.win { width: 164px; padding-left: 25px; display: flex; }
.win button { width: 46px; display: grid; place-items: center; }
.tabs { display: flex; align-items: flex-end; padding-left: 4px; background: #555; color: #ddd; }
.tabs button { height: 18px; padding: 0 10px; line-height: 17px; }
.tabs button:first-child { padding-right: 14px; }
.tabs button.on { color: #fff; background: linear-gradient(#888, #5f5f5f); outline: 1px solid #333; }
.pill { display: flex; align-items: center; gap: 5px; height: 18px; margin-left: 22px; }

.ribbon { display: flex; height: 100px; padding-left: 1px; background: linear-gradient(#4b4b4b, #343434); border-top: 1px solid #333; border-bottom: 1px solid #999; }
.panel { display: flex; flex-direction: column; border-right: 1px solid #3c3c3c; border-left: 1px solid #6c6c6c; background: #5b5b5b; }
.panel footer { height: 18px; margin-bottom: 1px; line-height: 17px; display: flex; align-items: center; justify-content: center; gap: 8px; position: relative; background: linear-gradient(#474747, #555); }
.la { position: absolute; right: 4px; top: 5px; }
.body { flex: 1; display: flex; padding: 5px 2px 0; }
.big { display: flex; flex-direction: column; align-items: center; position: relative; padding-top: 2px; }
.big span { margin-top: 4px; text-align: center; }
.big > .car { margin-top: 4px; }
.big > .side { position: absolute; right: 0; top: 49px; }
.off { color: #7d7d7d; }
.rows { display: flex; flex-direction: column; }
.rows button { display: flex; align-items: center; gap: 5px; height: 24px; }
.p-view { width: 176px; }
.p-coord { width: 145px; }
.p-vport { width: 110px; }
.p-style { width: 233px; }
.p-light { width: 93px; }
.p-sun { width: 109px; }
.p-mat { width: 127px; }
.p-cam { width: 83px; }
.p-render { width: 287px; }
.p-a360 { width: 86px; }
.list { display: flex; width: 124px; height: 65px; margin-top: 3px; border: 1px solid #333; }
.list ul { flex: 1; list-style: none; margin: 0; padding: 0; background: #4f4f4f; }
.list li { display: flex; align-items: center; gap: 2px; height: 21px; padding-left: 1px; }
.scroll { width: 14px; display: grid; border-left: 1px solid #333; }
.scroll button { display: grid; place-items: center; background: linear-gradient(#777, #505050); border-bottom: 1px solid #333; }
.p-view .big { flex: 1; }
.coord { gap: 10px; padding-left: 4px; }
.cc { display: grid; align-content: start; row-gap: 6px; padding-top: 3px; }
.cc span { display: flex; align-items: center; gap: 2px; }
.cr { flex: 1; }
.cg { display: grid; grid-template-columns: repeat(4, 25px); gap: 6px 0; padding: 3px 0 0 2px; }
.sel { display: flex; align-items: center; position: relative; height: 21px; padding-left: 2px; background: linear-gradient(#737373, #4e4e4e); border: 1px solid #333; }
.sel::after { content: ""; position: absolute; right: 3px; top: 7px; border: 4px solid transparent; border-top-color: #eee; border-bottom: 0; }
.sel select { flex: 1; min-width: 0; appearance: none; padding: 0 2px; outline: 0; }
.cr .sel { margin-top: 3px; }
.p-vport .big { width: 46px; margin-right: 6px; }
.p-vport .big .side { right: -3px; }
.col { flex-direction: column; }
.wide { width: 200px; margin-bottom: 2px; }
.line { display: flex; align-items: center; gap: 4px; height: 25px; padding-left: 4px; }
.line .car { margin-right: 5px; }
.slider { flex: 1; height: 22px; margin: 0 1px 0 4px; position: relative; display: flex; border: 1px solid #444; color: #999; }
.slider label { position: absolute; left: 5px; top: 1px; }
.slider input { appearance: none; flex: 1; min-width: 0; background: linear-gradient(90deg, #808080 60%, #5f5f5f 60%); }
.slider input::-webkit-slider-thumb { appearance: none; width: 0; }
.slider output { width: 26px; text-align: center; line-height: 20px; border-left: 1px solid #444; color: #aaa; }
.p-light .big, .p-sun .off { flex: 1; }
.p-sun .big { min-width: 38px; }
.p-mat .body { padding-left: 5px; }
.p-cam .body { padding-left: 4px; }
.p-cam .rows button { gap: 3px; }
.rows .gap { margin-left: 4px; }
.p-render .big { width: 82px; }
.rsel { flex: 1; display: flex; flex-direction: column; gap: 4px; }
.prog { height: 21px; display: flex; align-items: center; background: linear-gradient(90deg, #ddd 22px, transparent 22px), linear-gradient(#fff 9px, #ccc 9px 10px, #f0f0f0 10px); }
.p-a360 .big { flex: 1; }

.files { display: flex; align-items: flex-end; height: 29px; padding: 0 0 4px 18px; background: linear-gradient(#383838 25px, #5b5b5b 25px); }
.ft { height: 22px; width: 129px; padding-left: 14px; text-align: left; color: #bbb; background: linear-gradient(#5a5a5a, #4c4c4c); clip-path: polygon(0 100%, 3px 85%, 7px 20%, 13px 0, calc(100% - 13px) 0, calc(100% - 7px) 20%, calc(100% - 3px) 85%, 100% 100%); }
.ft.on { width: 138px; margin-left: -6px; color: #fff; display: flex; align-items: center; gap: 8px; background: linear-gradient(#7c7c7c, #5b5b5b); }
.ft.on .ico { color: #3c3c3c; }
.ft.add { width: 26px; height: 18px; padding: 0 8px; }

.canvas { flex: 1; min-height: 480px; position: relative; overflow: hidden; background: #000; border-right: 7px solid #b4d2ef; }
.scene { position: absolute; inset: 0; }
.major { stroke: #303033; }
.wctl { position: absolute; top: 9px; right: 11px; display: flex; align-items: center; gap: 8px; }
.vcube { position: absolute; top: 47px; right: 1px; }
.ct { font-family: "Noto Sans CJK SC", sans-serif; }
.wcs { position: absolute; top: 193px; right: 60px; width: 48px; height: 18px; border-radius: 4px; background: #77777f; color: #333; border: 1px solid #94949c; text-align: left; padding-left: 4px; line-height: 14px; font-size: 11px; }
.wcs i { float: right; margin: 5px 4px; border: 4px solid transparent; border-top: 4px solid #8c8c98; border-bottom: 0; }
.nav { position: absolute; top: 236px; right: 5px; width: 32px; height: 212px; padding-top: 18px; border-radius: 3px; background: rgba(88, 88, 88, .75); display: flex; flex-direction: column; align-items: center; gap: 4px; border: 1px solid #555; }
.nav .car { border-top-color: #262626; }
.nav hr { width: 100%; margin: 0; border: 0; border-top: 1px solid #555; }
.ucs { position: absolute; left: 0; bottom: 0; }
.ax { font: 300 16px Lato, sans-serif; }
.cmd { position: absolute; left: 20%; right: calc(20% - 5px); bottom: 1px; height: 26px; display: flex; }
.cmdl { width: 54px; display: flex; align-items: center; gap: 7px; padding-left: 4px; color: #ccc; background: linear-gradient(#555, #333); }
.cmdr { flex: 1; display: flex; align-items: center; padding: 0 3px 0 5px; background: rgba(195, 195, 195, .9); }
.cmdr .car { margin-left: 4px; border-top-color: #555; }
.cmdr .up { border-bottom-color: #111; }
.cmdr input { flex: 1; margin-left: 8px; font-style: italic; outline: 0; }
.cmdr input::placeholder { color: #666; opacity: 1; }

.bottom { display: flex; justify-content: space-between; height: 28px; background: #383838; border-top: 1px solid #555; }
.lay { display: flex; padding-left: 11px; }
.lay button { width: 56px; height: 17px; line-height: 17px; color: #bbb; background: #555; margin-right: -1px; clip-path: polygon(0 0, 100% 0, calc(100% - 6px) 80%, calc(100% - 10px) 100%, 10px 100%, 6px 80%); }
.lay button.on { width: 48px; color: #fff; font-weight: 700; background: #7a7a7a; }
.lay button.add { width: 26px; display: grid; place-items: center; }
.stat { display: flex; background: #4a4a4a; }
.sg { display: flex; align-items: center; gap: 5px; padding: 0 3px; border: 1px solid #6b6b6b; border-left-color: #777; }
.sg .car { border-width: 5px 4px 0; }
.si { width: 19px; display: grid; place-items: center; color: #c8c8c8; }
.sa1 { color: #2f8cf5; }
.model, .scale { font-weight: 500; color: #fff; }
</style>
